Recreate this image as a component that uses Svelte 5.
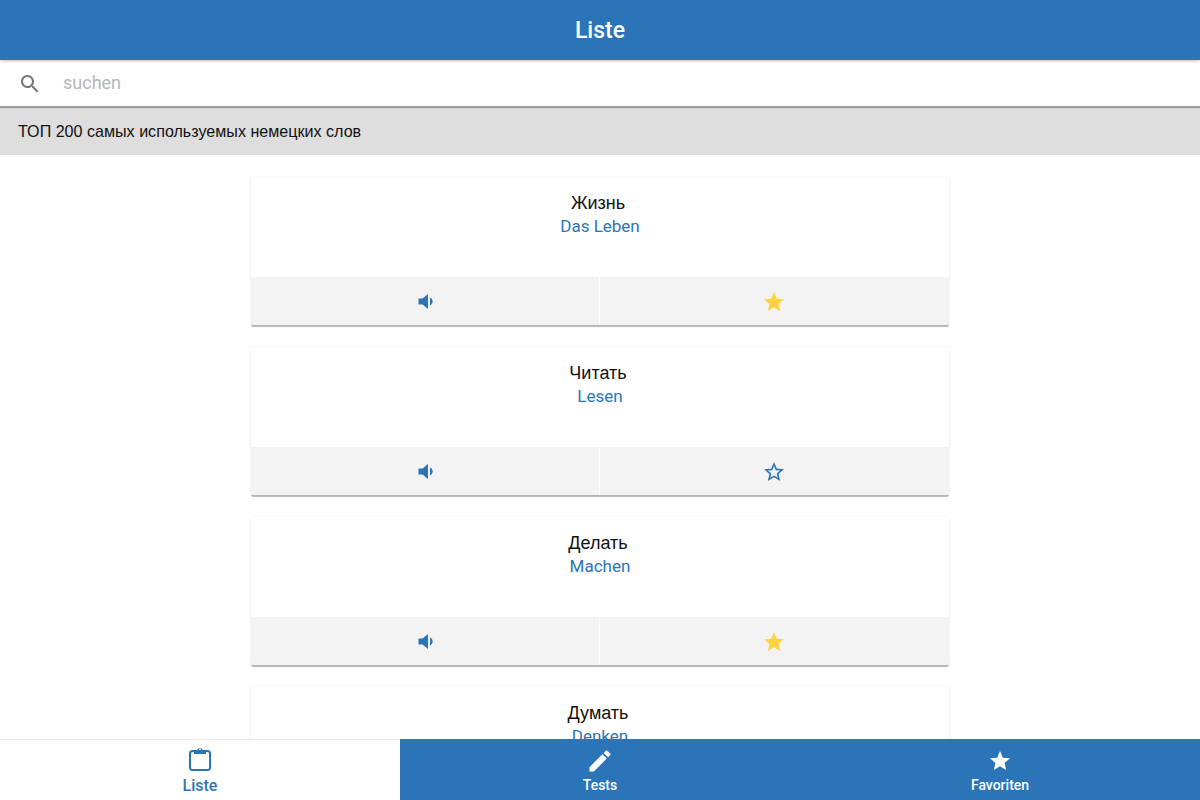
<script>
  const words = [
    { ru: 'Жизнь', de: 'Das Leben', fav: true },
    { ru: 'Читать', de: 'Lesen', fav: false },
    { ru: 'Делать', de: 'Machen', fav: true },
    { ru: 'Думать', de: 'Denken', fav: false }
  ];

  const tabs = ['Liste', 'Tests', 'Favoriten'];
  const starPath = 'M12 17.27L18.18 21l-1.64-7.03L22 9.24l-7.19-.61L12 2 9.19 8.63 2 9.24l5.46 4.73L5.82 21z';
  const starBorderPath =
    'M22 9.24l-7.19-.62L12 2 9.19 8.63 2 9.24l5.46 4.73L5.82 21 12 17.27 18.18 21l-1.63-7.03L22 9.24zM12 15.4l-3.76 2.27 1-4.28-3.32-2.88 4.38-.38L12 6.1l1.71 4.04 4.38.38-3.32 2.88 1 4.28L12 15.4z';
</script>

<div class="page">
  <header class="topbar">Liste</header>

  <div class="search">
    <svg class="search-icon" viewBox="0 0 24 24" width="24" height="24">
      <path d="M15.5 14h-.79l-.28-.27C15.41 12.59 16 11.11 16 9.5 16 5.91 13.09 3 9.5 3S3 5.91 3 9.5 5.91 16 9.5 16c1.61 0 3.09-.59 4.23-1.57l.27.28v.79l5 4.99L20.49 19l-4.99-5zm-6 0C7.01 14 5 11.99 5 9.5S7.01 5 9.5 5 14 7.01 14 9.5 11.99 14 9.5 14z" />
    </svg>
    <input placeholder="suchen" />
  </div>

  <div class="section-title">ТОП 200 самых используемых немецких слов</div>

  <main class="list">
    {#each words as word}
      <article class="card">
        <div class="card-body">
          <div class="ru">{word.ru}</div>
          <div class="de">{word.de}</div>
        </div>
        <div class="card-actions">
          <button class="sound" aria-label="Anhören">
            <svg viewBox="-0.5 -1 24 24" width="24" height="24" fill="#2a74b7">
              <path d="M5 8.5h4L14.5 4v15L9 14.5H5zM16.5 7.5c1.6.8 2.7 2.2 2.7 4s-1.1 3.2-2.7 4z" />
            </svg>
          </button>
          <button class="fav" aria-label="Favorit">
            <svg viewBox="1 -1 24 24" width="24" height="24" fill={word.fav ? '#fdd33f' : '#2a74b7'}>
              <path d={word.fav ? starPath : starBorderPath} />
            </svg>
          </button>
        </div>
      </article>
    {/each}
  </main>

  <nav class="tabs">
    {#each tabs as tab, i}
      <button class="tab" class:active={i === 0}>
        <div class="tab-icon">
          {#if i === 0}
            <svg viewBox="0 1 28 28" width="28" height="28" fill="none" stroke="currentColor">
              <rect x="4" y="5" width="20" height="19" rx="2.5" stroke-width="2" />
              <path
                d="M8 8V4h3.3a2.8 2.8 0 0 1 5.4 0H20v4zM14 2.4a1 1 0 1 0 .01 0z"
                fill="currentColor"
                fill-rule="evenodd"
                stroke="none"
              />
            </svg>
          {:else if i === 1}
            <svg viewBox="0 0 24 24" width="28" height="28" fill="currentColor">
              <path d="M3 17.25V21h3.75L17.81 9.94l-3.75-3.75L3 17.25zM20.71 7.04c.39-.39.39-1.02 0-1.41l-2.34-2.34c-.39-.39-1.02-.39-1.41 0l-1.83 1.83 3.75 3.75 1.83-1.83z" />
            </svg>
          {:else}
            <svg viewBox="0 0 24 24" width="24" height="24" fill="currentColor">
              <path d={starPath} />
            </svg>
          {/if}
        </div>
        <span>{tab}</span>
      </button>
    {/each}
  </nav>
</div>

<style>
  :global(body) {
    margin: 0;
    font-family: Roboto, 'Liberation Sans', sans-serif;
    background: #fff;
  }

  .page {
    height: 800px;
    display: flex;
    flex-direction: column;
    overflow: hidden;
  }

  .topbar {
    position: relative;
    z-index: 2;
    flex: none;
    height: 60px;
    line-height: 62px;
    background: #2a74b7;
    color: #fff;
    text-align: center;
    font-size: 23px;
    font-weight: 500;
    box-shadow: 0 1px 3px rgba(0, 0, 0, 0.25);
  }

  .search {
    position: relative;
    z-index: 1;
    flex: none;
    height: 45px;
    margin-top: 1px;
    box-sizing: border-box;
    display: flex;
    align-items: center;
    gap: 21px;
    padding: 0 18px;
    background: #fff;
    box-shadow: 0 2px 1px rgba(0, 0, 0, 0.3);
  }

  .search-icon {
    flex: none;
    fill: #757575;
  }

  .search input {
    flex: 1;
    border: none;
    outline: none;
    padding: 0 0 2px;
    font: 18px Roboto, sans-serif;
    background: transparent;
  }

  .search input::placeholder {
    color: #b5b5b5;
    opacity: 1;
  }

  .section-title {
    flex: none;
    height: 47px;
    line-height: 47px;
    padding: 2px 0 0 18px;
    background: #dedede;
    color: #111;
    font-size: 16.1px;
    font-family: 'Liberation Sans', Arial, sans-serif;
  }

  .list {
    flex: 1;
    min-height: 0;
    overflow: hidden;
    display: flex;
    flex-direction: column;
    align-items: center;
    gap: 22px;
    padding-top: 22px;
  }

  .card {
    flex: none;
    width: 698px;
    background: #fff;
    border-radius: 2px;
    box-shadow: 0 2px 1px rgba(0, 0, 0, 0.28), 0 0 3px rgba(0, 0, 0, 0.06);
    overflow: hidden;
  }

  .card-body {
    height: 100px;
    box-sizing: border-box;
    padding-top: 15px;
    text-align: center;
    font-size: 17px;
    line-height: 24px;
  }

  .ru {
    padding-right: 4px;
    color: #111;
    font-size: 18px;
    line-height: 22px;
    font-family: 'Liberation Sans', Arial, sans-serif;
  }

  .de {
    color: #2a74b7;
  }

  .card-actions {
    height: 48px;
    display: flex;
    gap: 1px;
    background: #fff;
  }

  .card-actions button {
    display: flex;
    align-items: center;
    justify-content: center;
    border: none;
    padding: 0;
    background: #f3f3f3;
  }

  .sound {
    flex: none;
    width: 348px;
  }

  .fav {
    flex: 1;
  }

  .tabs {
    flex: none;
    height: 61px;
    display: flex;
    position: relative;
    z-index: 1;
    background: #2a74b7;
  }

  .tab {
    flex: 1;
    display: flex;
    flex-direction: column;
    align-items: center;
    border: none;
    padding: 8px 0 0;
    background: #2a74b7;
    color: #fff;
    font: 500 14px/16px Roboto, sans-serif;
  }

  .tab-icon {
    height: 28px;
    display: flex;
    align-items: center;
  }

  .tab span {
    margin-top: 2px;
  }

  .tab.active {
    background: #fff;
    color: #2a74b7;
    box-shadow: inset 0 1px 0 #e6e6e6;
    font-size: 16px;
  }

  .tab.active span {
    margin-top: 3px;
  }
</style>
